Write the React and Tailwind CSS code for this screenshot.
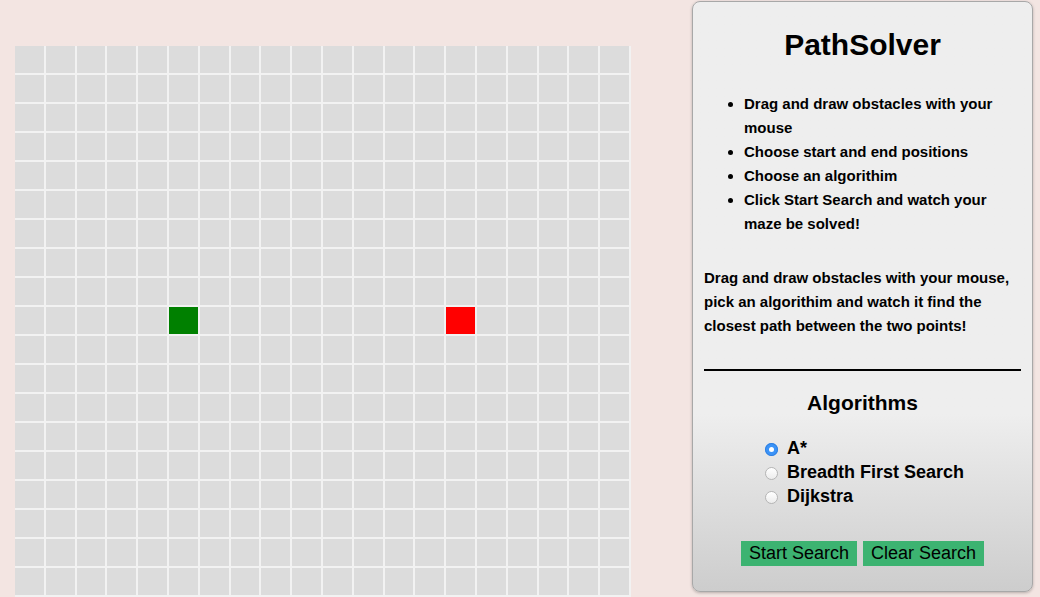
import React, { useState } from "react";

const ROWS = 20;
const COLS = 20;
const START = { r: 9, c: 5 };
const END = { r: 9, c: 14 };

const algorithms = ["A*", "Breadth First Search", "Dijkstra"];

export default function App() {
  const [algo, setAlgo] = useState("A*");

  const cells = [];
  for (let r = 0; r < ROWS; r++) {
    for (let c = 0; c < COLS; c++) {
      let color = "bg-[#dcdcdc]";
      if (r === START.r && c === START.c) color = "bg-[#008000]";
      if (r === END.r && c === END.c) color = "bg-[#ff0000]";
      cells.push(
        <div
          key={`${r}-${c}`}
          className={`h-[29px] border-r-2 border-b-2 border-[#f2f2f2] ${color}`}
        />
      );
    }
  }

  return (
    <div
      className="h-[597px] w-[1040px] overflow-hidden bg-[#f3e5e2] text-black"
      style={{ fontFamily: '"Liberation Sans", Arial, sans-serif' }}
    >
      <div className="flex items-start pl-[15px]">
        {/* Grid */}
        <div className="mt-[46px] grid w-[616px] grid-cols-20">{cells}</div>

        {/* Side panel */}
        <div className="ml-[61px] mt-[1px] flex h-[591px] w-[341px] flex-col rounded-lg border border-[#a8a8a8] bg-gradient-to-b from-[#eeeeee] from-70% to-[#cdcdcd] px-[11px] shadow-[0_1px_3px_rgba(0,0,0,0.25)]">
          <h1 className="mt-[25px] text-center text-[30px] font-bold leading-[36px]">
            PathSolver
          </h1>

          <ul className="mt-[29px] list-disc pl-10 text-[15px] font-bold leading-[24px]">
            <li>Drag and draw obstacles with your mouse</li>
            <li>Choose start and end positions</li>
            <li>Choose an algorithim</li>
            <li>Click Start Search and watch your maze be solved!</li>
          </ul>

          <p className="mt-[30px] text-[15px] font-bold leading-[24px]">
            Drag and draw obstacles with your mouse, pick an algorithim and
            watch it find the closest path between the two points!
          </p>

          <hr className="mt-[31px] border-t-2 border-black" />

          <h2 className="mt-[18px] text-center text-[21px] font-bold leading-[28px]">
            Algorithms
          </h2>

          <div className="ml-[61px] mt-[19px] flex flex-col">
            {algorithms.map((a) => (
              <label
                key={a}
                className="flex cursor-pointer items-center text-[18px] font-bold leading-[24px]"
                onClick={() => setAlgo(a)}
              >
                {algo === a ? (
                  <span className="mr-[9px] mt-[2px] flex h-[13px] w-[13px] items-center justify-center rounded-full bg-[#3b93f7] shadow-[inset_0_0_0_1px_#2f7fe0]">
                    <span className="h-[5px] w-[5px] rounded-full bg-white" />
                  </span>
                ) : (
                  <span className="mr-[9px] mt-[2px] h-[13px] w-[13px] rounded-full border border-[#b5b5b5] bg-gradient-to-b from-white to-[#ececec]" />
                )}
                {a}
              </label>
            ))}
          </div>

          <div className="mt-[33px] flex justify-center gap-[6px]">
            <button className="h-[25px] bg-[#3cb371] px-[8px] text-[18px] leading-[25px]">
              Start Search
            </button>
            <button className="h-[25px] bg-[#3cb371] px-[8px] text-[18px] leading-[25px]">
              Clear Search
            </button>
          </div>
        </div>
      </div>
    </div>
  );
}
